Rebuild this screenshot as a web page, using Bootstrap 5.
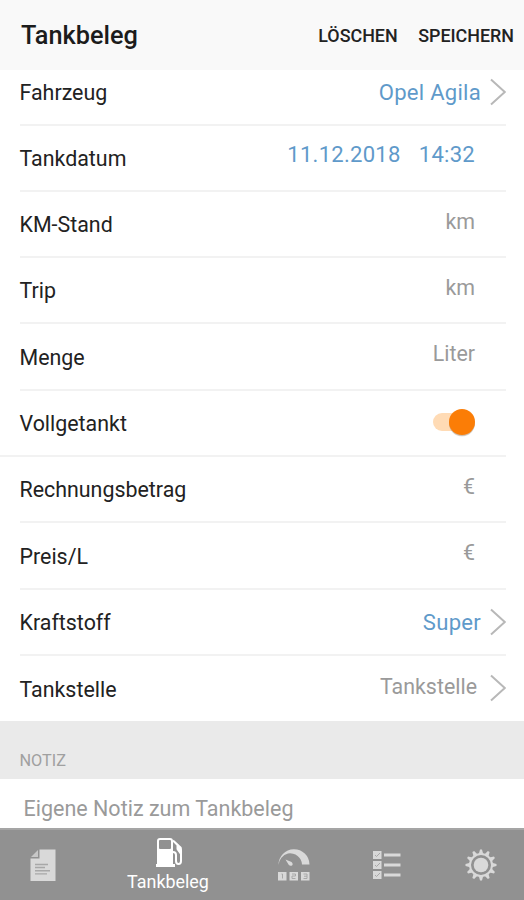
<!DOCTYPE html>
<html lang="de">
<head>
<meta charset="utf-8">
<meta name="viewport" content="width=device-width, initial-scale=1">
<title>Tankbeleg</title>
<link href="https://cdn.jsdelivr.net/npm/bootstrap@5.3.0/dist/css/bootstrap.min.css" rel="stylesheet">
<style>
body{font-family:Roboto,"Liberation Sans",sans-serif;font-size:21.4px;line-height:26px;color:#222;background:#fff;height:900px;overflow:hidden}
.app-bar{height:70px;background:#f9f9f9;padding:2px 10px 0 21px;color:#1c1c1c}
.app-title{font-size:25.3px;font-weight:500}
.app-action{font-size:17.9px;font-weight:500;color:#222;text-decoration:none;margin-left:20.5px}
.entry{height:66.3px;margin-left:19.5px;margin-right:18px;border-bottom:2px solid #f2f2f2;padding-top:2.3px}
.entry-first{height:55.6px;padding-bottom:10px}
.entry-wide{margin-left:0;padding-left:19.5px}
.entry-last{height:65px;border-bottom:0}
.entry-value{font-size:21.4px;color:#9a9a9a;margin-right:31px;padding-bottom:7px;text-decoration:none}
.picked{font-size:22.1px;color:#5f9aca;letter-spacing:.25px;padding-bottom:9px}
.entry-link{margin-right:9px;padding-bottom:2.5px}
.entry-station{margin-right:13px;padding-bottom:6px}
.clock{margin-left:18px}
.chevron{width:16px;height:28px;fill:none;stroke:#b8b8b8;stroke-width:2;margin-bottom:2.5px}
.toggle{width:46px;height:34px;margin-right:31px;margin-bottom:4.5px}
.section-head{height:58px;background:#eaeaea;color:#a0a0a0;font-size:16.3px;line-height:20px;padding:0 19.5px 7.5px}
.note{height:49px;font-size:21.5px;padding:17px 23.5px 0;color:#9a9a9a}
.tabs{height:72px;background:#919191;border-top:2px solid #a5a5a5}
.tab-item{height:70px}
.tab-item svg{display:block;fill:#d9d9d9}
.tab-fuel{padding-top:7px}
.tab-fuel svg{margin-left:3px}
.tab-label{font-size:17.9px;line-height:22px;color:#fff;padding-top:2px}
.tab-doc{width:86px}.tab-fuel{width:164px}.tab-gauge{width:87px}.tab-list{width:100px}.tab-gear{width:87px}
</style>
</head>
<body class="d-flex flex-column">
<header class="app-bar d-flex align-items-center flex-shrink-0">
  <h1 class="app-title mb-0 me-auto">Tankbeleg</h1>
  <a class="app-action" href="#">LÖSCHEN</a>
  <a class="app-action" href="#">SPEICHERN</a>
</header>
<main class="flex-grow-1 overflow-hidden">
  <div class="entry entry-first d-flex align-items-center"><span class="me-auto">Fahrzeug</span><a class="entry-value picked entry-link" href="#">Opel Agila</a><svg class="chevron" viewBox="0 0 16 28"><path d="M1 1.5 14.8 14 1 26.5"/></svg></div>
  <div class="entry d-flex align-items-center"><span class="me-auto">Tankdatum</span><span class="entry-value picked d-flex"><span>11.12.2018</span><span class="clock">14:32</span></span></div>
  <div class="entry d-flex align-items-center"><span class="me-auto">KM-Stand</span><span class="entry-value">km</span></div>
  <div class="entry d-flex align-items-center"><span class="me-auto">Trip</span><span class="entry-value">km</span></div>
  <div class="entry d-flex align-items-center"><span class="me-auto">Menge</span><span class="entry-value">Liter</span></div>
  <div class="entry entry-wide d-flex align-items-center"><span class="me-auto">Vollgetankt</span>
    <svg class="toggle" viewBox="0 0 46 34" role="img" aria-label="An"><rect x="4" y="8" width="36" height="18" rx="9" fill="#ffdbb5"/><circle cx="33" cy="18.6" r="13" fill="#8a6a4a" opacity=".18"/><circle cx="33" cy="18" r="13" fill="#8a6a4a" opacity=".3"/><circle cx="33" cy="17" r="13" fill="#fb7d06"/></svg>
  </div>
  <div class="entry d-flex align-items-center"><span class="me-auto">Rechnungsbetrag</span><span class="entry-value">€</span></div>
  <div class="entry d-flex align-items-center"><span class="me-auto">Preis/L</span><span class="entry-value">€</span></div>
  <div class="entry d-flex align-items-center"><span class="me-auto">Kraftstoff</span><a class="entry-value picked entry-link" href="#">Super</a><svg class="chevron" viewBox="0 0 16 28"><path d="M1 1.5 14.8 14 1 26.5"/></svg></div>
  <div class="entry entry-last d-flex align-items-center"><span class="me-auto">Tankstelle</span><a class="entry-value entry-station" href="#">Tankstelle</a><svg class="chevron" viewBox="0 0 16 28"><path d="M1 1.5 14.8 14 1 26.5"/></svg></div>
  <div class="section-head d-flex align-items-end">NOTIZ</div>
  <div class="note">Eigene Notiz zum Tankbeleg</div>
</main>
<nav class="tabs d-flex flex-shrink-0">
  <div class="tab-item tab-doc d-flex align-items-center justify-content-center">
    <svg width="28" height="34" viewBox="0 0 28 34"><path d="M10.5 1.5H26.5V33H1.5V10.5h9z"/><path d="M9 2v7H2z" opacity=".75"/><path d="M6 16.5h13M6 19.5h10M6 22.7h15M6 25.9h12" stroke="#a8a8a8" stroke-width="1.4"/></svg>
  </div>
  <div class="tab-item tab-fuel d-flex flex-column align-items-center">
    <svg width="30" height="32" viewBox="0 0 30 32"><path fill="#fff" fill-rule="evenodd" d="M5 1h10q3 0 3 3v23h2v3H1v-3h1V4q0-3 3-3zm0 2q-1 0-1 1v7q0 1 1 1h10q1 0 1-1V4q0-1-1-1z"/><path d="M18 15q3 0 3 3v6q0 3 2.500 3t2.500-3v-7l-3.500-5V8L18 3.500" fill="none" stroke="#fff" stroke-width="2"/><path fill="#fff" d="m19 3.500 7.500 6.500q.7 1 .5 8l-4.500-5V8z"/></svg>
    <span class="tab-label">Tankbeleg</span>
  </div>
  <div class="tab-item tab-gauge d-flex align-items-center justify-content-center">
    <svg width="34" height="34" viewBox="0 0 34 34"><path d="M1.500 17A15.500 15.500 0 0 1 32.500 16.500H25A12 11.500 0 0 0 11 5.500 13 13 0 0 0 1.500 17z"/><path d="m8.500 11.500 6 2.500q2 2 .5 3.500-2 1-3.500-1z"/><path d="M1 24h8.500v8.500H1zM12.500 24H21v8.500h-8.500zM24 24h8.500v8.500H24z"/><path d="M4.500 26h1v4.500M15 26h3.500v2H15v2.500h3.500M26.500 26H30v4.500h-3.500M27 28.200h3" fill="none" stroke="#a8a8a8"/></svg>
  </div>
  <div class="tab-item tab-list d-flex align-items-center justify-content-center">
    <svg width="30" height="32" viewBox="0 0 30 32"><path d="M1 2h8.500v8H1zM1 12h8.500v8H1zM1 22h8.500v8H1zM12 4.500h16.500v3H12zM12 14.500h16.500v3H12zM12 24.500h16.500v3H12z"/><path d="m3 6 1.500 1.500L8 4M3 16l1.500 1.500L8 14M3 26l1.500 1.500L8 24" fill="none" stroke="#a8a8a8"/></svg>
  </div>
  <div class="tab-item tab-gear d-flex align-items-center justify-content-center">
    <svg width="32" height="32" viewBox="-16 -16 32 32"><circle r="7.300"/><circle r="11" fill="none" stroke="#d9d9d9" stroke-width="2"/><g id="teeth"><path id="tooth" d="M-2.200-11-1-15.500H1L2.200-11z"/><use href="#tooth" transform="rotate(30)"/><use href="#tooth" transform="rotate(60)"/></g><use href="#teeth" transform="rotate(90)"/><use href="#teeth" transform="rotate(180)"/><use href="#teeth" transform="rotate(270)"/></svg>
  </div>
</nav>
<script src="https://cdn.jsdelivr.net/npm/bootstrap@5.3.0/dist/js/bootstrap.bundle.min.js"></script>
</body>
</html>
